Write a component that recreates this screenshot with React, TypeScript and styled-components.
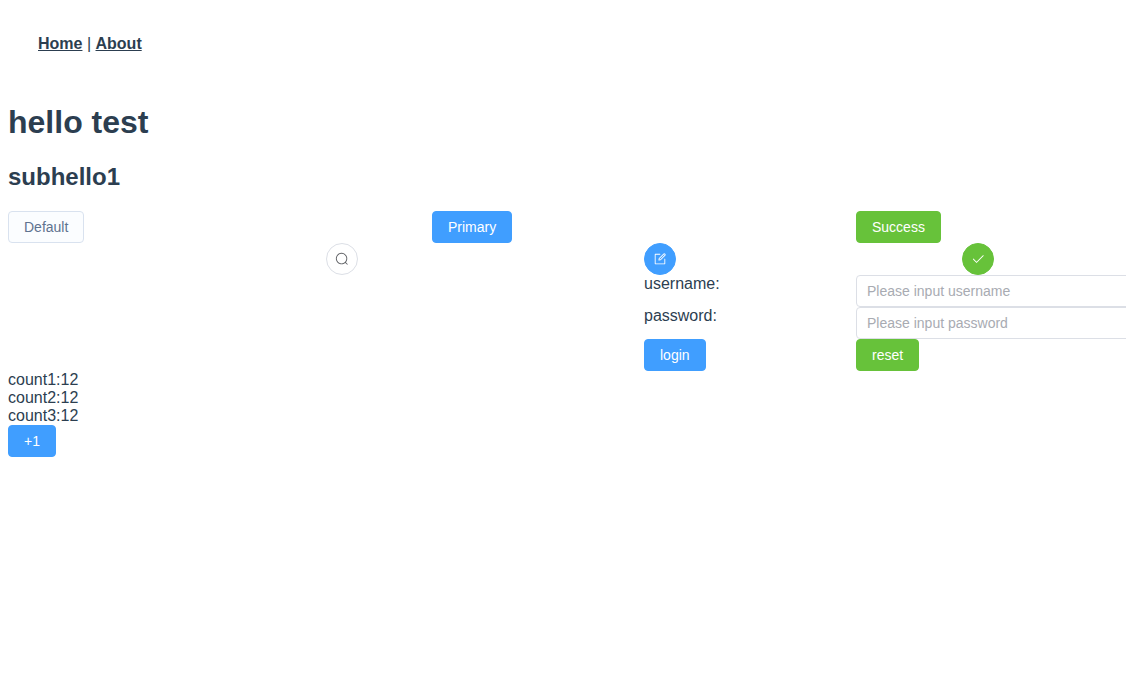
import styled, { createGlobalStyle } from "styled-components";

const GlobalStyle = createGlobalStyle`
  html, body {
    margin: 0;
    background: #fff;
  }
  body {
    font-family: "Liberation Sans", Arial, sans-serif;
    color: #2c3e50;
  }
`;

// the real row is wider than the window, it just gets cut off at the right
const Page = styled.div`
  box-sizing: border-box;
  width: 100%;
  padding-left: 8px;
  overflow: hidden;
`;

const Nav = styled.nav`
  padding: 35px 30px 29px;
  font-size: 16px;
  line-height: 18px;
`;

const NavLink = styled.a`
  color: #2c3e50;
  font-weight: bold;
  text-decoration: underline;
`;

const Title = styled.h1`
  font-size: 32px;
  line-height: 37px;
  margin: 22px 0 22px;
`;

const SubTitle = styled.h2`
  font-size: 24px;
  line-height: 28px;
  margin: 0 0 20px;
`;

const ButtonRow = styled.div`
  display: grid;
  grid-template-columns: repeat(3, 424px);
  justify-items: start;
`;

const CircleRow = styled.div`
  display: grid;
  grid-template-columns: repeat(3, 318px);
  justify-items: center;
  margin-left: 175px;
`;

const Button = styled.button<{ $variant?: "default" | "primary" | "success" }>`
  display: inline-flex;
  align-items: center;
  justify-content: center;
  box-sizing: border-box;
  height: 32px;
  padding: 8px 15px;
  border: 1px solid
    ${(p) => (p.$variant === "primary" ? "#409eff" : p.$variant === "success" ? "#67c23a" : "#d9e2ef")};
  border-radius: 4px;
  background: ${(p) => (p.$variant === "primary" ? "#409eff" : p.$variant === "success" ? "#67c23a" : "#fbfdff")};
  color: ${(p) => (p.$variant === "primary" || p.$variant === "success" ? "#fff" : "#5f7390")};
  font-family: inherit;
  font-size: 14px;
  line-height: 1;
`;

const CircleButton = styled(Button)`
  width: 32px;
  padding: 8px;
  border-radius: 50%;
  border-color: ${(p) => (p.$variant === "primary" ? "#409eff" : p.$variant === "success" ? "#67c23a" : "#dcdfe6")};
  background: ${(p) => (p.$variant === "primary" ? "#409eff" : p.$variant === "success" ? "#67c23a" : "#fff")};
  color: ${(p) => (p.$variant === "primary" || p.$variant === "success" ? "#fff" : "#606266")};
`;

const Icon = styled.svg`
  width: 14px;
  height: 14px;
  fill: currentColor;
`;

const LoginForm = styled.form`
  display: grid;
  grid-template-columns: 212px 424px;
  grid-auto-rows: 32px;
  justify-items: start;
  margin-left: 636px;
`;

const Label = styled.label`
  font-size: 16px;
  line-height: 18px;
`;

const TextInput = styled.input`
  box-sizing: border-box;
  width: 100%;
  height: 32px;
  padding: 0 10px;
  border: 1px solid #dcdfe6;
  border-radius: 4px;
  font-family: inherit;
  font-size: 14px;
  color: #606266;
  outline: none;

  &::placeholder {
    color: #a8abb2;
  }
`;

const Counts = styled.div`
  font-size: 16px;
  line-height: 18px;
`;

export default function App() {
  return (
    <Page>
      <GlobalStyle />
      <Nav>
        <NavLink href="#/">Home</NavLink> | <NavLink href="#/about">About</NavLink>
      </Nav>
      <Title>hello test</Title>
      <SubTitle>subhello1</SubTitle>
      <ButtonRow>
        <Button type="button">Default</Button>
        <Button type="button" $variant="primary">Primary</Button>
        <Button type="button" $variant="success">Success</Button>
      </ButtonRow>
      <CircleRow>
        <CircleButton type="button" aria-label="search">
          <Icon viewBox="0 0 1024 1024">
            <path d="m795.904 750.72 124.992 124.928a32 32 0 0 1-45.248 45.248L750.656 795.904a416 416 0 1 1 45.248-45.248zM480 832a352 352 0 1 0 0-704 352 352 0 0 0 0 704z" />
          </Icon>
        </CircleButton>
        <CircleButton type="button" $variant="primary" aria-label="edit">
          <Icon viewBox="0 0 1024 1024">
            <path d="M832 512a32 32 0 1 1 64 0v352a32 32 0 0 1-32 32H160a32 32 0 0 1-32-32V160a32 32 0 0 1 32-32h352a32 32 0 0 1 0 64H192v640h640V512z" />
            <path d="m469.952 554.24 52.8-7.552L847.104 222.4a32 32 0 1 0-45.248-45.248L477.44 501.44l-7.552 52.8zm422.4-422.4a96 96 0 0 1 0 135.808l-331.84 331.84a32 32 0 0 1-18.112 9.088L436.8 623.68a32 32 0 0 1-36.224-36.224l15.104-105.6a32 32 0 0 1 9.024-18.112l331.904-331.84a96 96 0 0 1 135.744 0z" />
          </Icon>
        </CircleButton>
        <CircleButton type="button" $variant="success" aria-label="check">
          <Icon viewBox="0 0 1024 1024">
            <path d="M406.656 706.944 195.84 496.256a32 32 0 1 0-45.248 45.248l256 256 512-512a32 32 0 0 0-45.248-45.248L406.592 706.944z" />
          </Icon>
        </CircleButton>
      </CircleRow>
      <LoginForm>
        <Label htmlFor="username">username:</Label>
        <TextInput id="username" placeholder="Please input username" />
        <Label htmlFor="password">password:</Label>
        <TextInput id="password" type="password" placeholder="Please input password" />
        <Button type="button" $variant="primary">login</Button>
        <Button type="button" $variant="success">reset</Button>
      </LoginForm>
      <Counts>
        <div>count1:12</div>
        <div>count2:12</div>
        <div>count3:12</div>
      </Counts>
      <Button type="button" $variant="primary">+1</Button>
    </Page>
  );
}
